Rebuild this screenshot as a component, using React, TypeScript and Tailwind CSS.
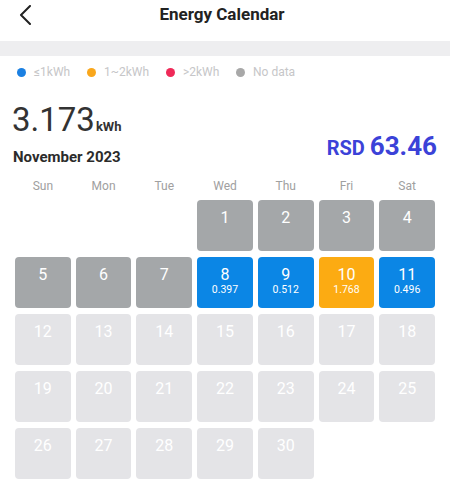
import React from "react";

type Day = {
  day: number;
  kind: "past" | "low" | "mid" | "future";
  value?: string;
};

const weekdays = ["Sun", "Mon", "Tue", "Wed", "Thu", "Fri", "Sat"];

const values: Record<number, { kind: Day["kind"]; value: string }> = {
  8: { kind: "low", value: "0.397" },
  9: { kind: "low", value: "0.512" },
  10: { kind: "mid", value: "1.768" },
  11: { kind: "low", value: "0.496" },
};

const days: Day[] = Array.from({ length: 30 }, (_, i) => {
  const d = i + 1;
  if (values[d]) return { day: d, ...values[d] };
  return { day: d, kind: d < 8 ? "past" : "future" };
});

const cellColor: Record<Day["kind"], string> = {
  past: "bg-[#a4a7a9]",
  low: "bg-[#0b86e5]",
  mid: "bg-[#fcab12]",
  future: "bg-[#e4e4e7]",
};

const legend = [
  { color: "bg-[#1b80e2]", label: "≤1kWh", w: "w-[70px]" },
  { color: "bg-[#f9a71c]", label: "1~2kWh", w: "w-[79px]" },
  { color: "bg-[#ef2a58]", label: ">2kWh", w: "w-[70px]" },
  { color: "bg-[#a8a8a8]", label: "No data", w: "" },
];

export default function App() {
  return (
    <div className="w-[450px] h-[484px] overflow-hidden bg-white font-['Roboto','Liberation_Sans',sans-serif]">
      <div className="flex h-[30px] items-center">
        <div className="flex w-[48px] justify-start pl-[17px]">
          <svg width="16" height="20" viewBox="0 0 16 20" fill="none">
            <path d="M13 1 L4 10 L13 19" stroke="#222" strokeWidth="2" strokeLinecap="round" strokeLinejoin="round" />
          </svg>
        </div>
        <div className="flex-1 pr-[6px] text-center text-[17px] font-bold text-[#222]">Energy Calendar</div>
        <div className="w-[48px]" />
      </div>

      <div className="mt-[11px] h-[15px] bg-[#eeeef0]" />

      <div className="mt-[8px] flex h-[16px] items-center pl-[17px]">
        {legend.map((l) => (
          <div key={l.label} className={`flex items-center ${l.w}`}>
            <span className={`h-[9px] w-[9px] rounded-full ${l.color}`} />
            <span className="ml-[8px] text-[12px] leading-[16px] text-[#c6c6c8]">{l.label}</span>
          </div>
        ))}
      </div>

      <div className="mt-[24px] flex h-[32px] items-baseline pl-[12px] text-[#333]">
        <span className="text-[33px] leading-[32px]">3.173</span>
        <span className="ml-[1px] text-[13px] font-bold">kWh</span>
      </div>

      <div className="flex h-[30px] items-end justify-between pl-[13px] pr-[13px]">
        <div className="text-[15px] font-bold leading-[18px] text-[#2b2b2b]">November 2023</div>
        <div className="mb-[6px] flex items-baseline font-bold leading-[24px] text-[#3b42d8]">
          <span className="text-[20px]">RSD</span>
          <span className="ml-[5px] text-[26px]">63.46</span>
        </div>
      </div>

      <div className="mt-[13px] grid grid-cols-7 gap-x-[5px] px-[15px]">
        {weekdays.map((w) => (
          <div key={w} className="text-center text-[12px] leading-[14px] text-[#a0a0a0]">
            {w}
          </div>
        ))}
      </div>

      <div className="mt-[7px] grid grid-cols-7 gap-x-[5px] gap-y-[6px] px-[15px]">
        <div />
        <div />
        <div />
        {days.map((d) => (
          <div
            key={d.day}
            className={`h-[51px] rounded-[4px] pt-[8px] text-center text-white ${cellColor[d.kind]}`}
          >
            <div className="text-[16px] leading-[20px]">{d.day}</div>
            {d.value && <div className="-mt-[1px] text-[10.5px] leading-[12px]">{d.value}</div>}
          </div>
        ))}
      </div>
    </div>
  );
}
